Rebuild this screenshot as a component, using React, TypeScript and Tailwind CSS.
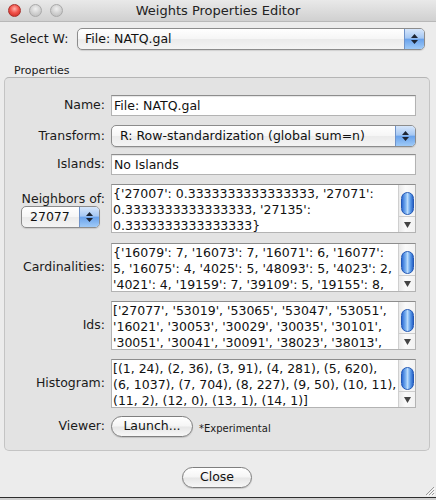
import React from "react";

// Aqua-style dialog: "Weights Properties Editor"

const font = "font-['DejaVu_Sans','Liberation_Sans',sans-serif]";

function Arrows() {
  return (
    <div className="flex h-full w-[20px] shrink-0 flex-col items-center justify-center gap-[2px] border-l border-[#6f93c9] bg-[linear-gradient(to_bottom,#d6e6fb_0%,#a6c8f3_45%,#6aa3ec_52%,#9fcaf7_100%)]">
      <svg width="7" height="4" viewBox="0 0 7 4">
        <path d="M3.5 0 L7 4 L0 4 Z" fill="#1d2533" />
      </svg>
      <svg width="7" height="4" viewBox="0 0 7 4">
        <path d="M0 0 L7 0 L3.5 4 Z" fill="#1d2533" />
      </svg>
    </div>
  );
}

function Popup({ value, className = "", pad = "pl-[8px]" }: { value: string; className?: string; pad?: string }) {
  return (
    <div
      className={`flex h-[22px] items-center overflow-hidden rounded-[5px] border border-[#8c8c8c] shadow-[0_1px_1px_rgba(0,0,0,0.12)] bg-[linear-gradient(to_bottom,#ffffff_0%,#f6f6f6_48%,#ebebeb_52%,#f4f4f4_100%)] ${className}`}
    >
      <span className={`flex-1 truncate text-[12.5px] text-[#111] ${pad}`}>{value}</span>
      <Arrows />
    </div>
  );
}

function Scroller() {
  return (
    <div className="flex w-[17px] shrink-0 flex-col border-l border-[#cfcfcf] bg-[linear-gradient(to_right,#e9e9e9,#fafafa_40%,#f2f2f2)]">
      <div className="flex flex-1 justify-center pt-[7px]">
        <div className="h-[23px] w-[13px] rounded-full border border-[#2459b5] bg-[linear-gradient(to_right,#2d6bd3_0%,#7fb5f2_35%,#b9dafb_50%,#5d9de9_75%,#2a63c8_100%)]" />
      </div>
      <div className="flex h-[16px] items-center justify-center border-t border-[#cdcdcd]">
        <svg width="7" height="6" viewBox="0 0 7 6">
          <path d="M0 0 L7 0 L3.5 6 Z" fill="#444" />
        </svg>
      </div>
    </div>
  );
}

function TextBox({ lines }: { lines: string[] }) {
  return (
    <div className="flex h-[49px] overflow-hidden border border-[#b3b3b3] border-t-[#8d8d8d] bg-white">
      <div className="flex-1 overflow-hidden whitespace-pre pl-[1px] pt-[1px] text-[12.5px] leading-[16px] text-[#111]">
        {lines.map((l) => (
          <div key={l}>{l}</div>
        ))}
      </div>
      <Scroller />
    </div>
  );
}

const field =
  "h-[21px] border border-[#b3b3b3] border-t-[#8d8d8d] bg-white px-[2px] text-[12.5px] leading-[19px] text-[#111] shadow-[inset_0_1px_1px_rgba(0,0,0,0.1)]";

const label = "text-right text-[12.5px] text-[#1a1a1a]";

function Pill({ children, className = "" }: { children: React.ReactNode; className?: string }) {
  return (
    <div
      className={`flex h-[21px] items-center justify-center rounded-full border border-[#7f7f7f] text-[12.5px] text-[#111] shadow-[0_1px_1px_rgba(0,0,0,0.15)] bg-[linear-gradient(to_bottom,#ffffff_0%,#f5f5f5_48%,#e6e6e6_52%,#f7f7f7_100%)] ${className}`}
    >
      {children}
    </div>
  );
}

export default function App() {
  return (
    <div className={`flex h-[500px] w-[436px] flex-col overflow-hidden bg-[#ececec] ${font}`}>
      {/* title bar */}
      <div className="relative flex h-[22px] shrink-0 items-center justify-center border-b border-[#b8b8b8] bg-[linear-gradient(to_bottom,#e9e9e9,#d0d0d0)]">
        <div className="absolute left-[8px] top-[4px] flex gap-[8px]">
          <span className="size-[13px] rounded-full border border-[#a8302b] bg-[radial-gradient(circle_at_50%_35%,#ffb3ad_0%,#f2554d_45%,#c5221c_100%)]" />
          <span className="size-[13px] rounded-full border border-[#a9a9a9] bg-[radial-gradient(circle_at_50%_35%,#f0f0f0_0%,#cfcfcf_55%,#b7b7b7_100%)]" />
          <span className="size-[13px] rounded-full border border-[#a9a9a9] bg-[radial-gradient(circle_at_50%_35%,#f0f0f0_0%,#cfcfcf_55%,#b7b7b7_100%)]" />
        </div>
        <span className="text-[13px] text-[#222]">Weights Properties Editor</span>
      </div>

      <div className="relative flex flex-1 flex-col">
        {/* Select W */}
        <div className="mt-[6px] flex items-center pl-[10px] pr-[11px]">
          <span className="w-[67px] text-[12.5px] text-[#1a1a1a]">Select W:</span>
          <Popup value="File: NATQ.gal" className="flex-1" pad="pl-[7px]" />
        </div>

        <div className="mt-[14px] pl-[14px] text-[11px] leading-[13px] text-[#1a1a1a]">Properties</div>

        {/* group box */}
        <div className="ml-[4px] w-[426px] rounded-[5px] border border-[#c4c4c4] border-t-[#b5b5b5] bg-[#e3e3e3] pb-[13px] pr-[13px] pt-[17px]">
          <div className="grid grid-cols-[100px_1fr] items-center gap-x-[6px]">
            <span className={label}>Name:</span>
            <div className={field}>File: NATQ.gal</div>

            <span className={`${label} mt-[9px]`}>Transform:</span>
            <Popup value="R: Row-standardization (global sum=n)" className="mt-[9px] h-[21px]" />

            <span className={`${label} mt-[7px]`}>Islands:</span>
            <div className={`${field} mt-[7px]`}>No Islands</div>

            <div className="mt-[9px] flex flex-col items-end self-start pt-[7px]">
              <span className={`${label} leading-[15px]`}>Neighbors of:</span>
              <Popup value="27077" className="mr-[5px] h-[21px] w-[79px]" />
            </div>
            <div className="mt-[9px]">
              <TextBox
                lines={[
                  "{'27007': 0.3333333333333333, '27071':",
                  "0.3333333333333333, '27135':",
                  "0.3333333333333333}",
                ]}
              />
            </div>

            <span className={`${label} mt-[10px]`}>Cardinalities:</span>
            <div className="mt-[10px]">
              <TextBox
                lines={[
                  "{'16079': 7, '16073': 7, '16071': 6, '16077':",
                  "5, '16075': 4, '4025': 5, '48093': 5, '4023': 2,",
                  "'4021': 4, '19159': 7, '39109': 5, '19155': 8,",
                ]}
              />
            </div>

            <span className={`${label} mt-[9px]`}>Ids:</span>
            <div className="mt-[9px]">
              <TextBox
                lines={[
                  "['27077', '53019', '53065', '53047', '53051',",
                  "'16021', '30053', '30029', '30035', '30101',",
                  "'30051', '30041', '30091', '38023', '38013',",
                ]}
              />
            </div>

            <span className={`${label} mt-[9px]`}>Histogram:</span>
            <div className="mt-[9px]">
              <TextBox
                lines={[
                  "[(1, 24), (2, 36), (3, 91), (4, 281), (5, 620),",
                  "(6, 1037), (7, 704), (8, 227), (9, 50), (10, 11),",
                  "(11, 2), (12, 0), (13, 1), (14, 1)]",
                ]}
              />
            </div>

            <span className={`${label} mt-[8px]`}>Viewer:</span>
            <div className="mt-[8px] flex items-center gap-[6px]">
              <Pill className="w-[82px]">Launch...</Pill>
              <span className="mt-[4px] text-[10px] text-[#1a1a1a]">*Experimental</span>
            </div>
          </div>
        </div>

        {/* close */}
        <div className="mt-[16px] flex justify-center">
          <Pill className="ml-[-2px] w-[70px]">Close</Pill>
        </div>

        {/* resize grip */}
        <svg className="absolute bottom-[1px] right-[1px]" width="11" height="11" viewBox="0 0 11 11">
          <path d="M10 2 L2 10 M10 5 L5 10 M10 8 L8 10" stroke="#9a9a9a" strokeWidth="1" />
          <path d="M11 3 L3 11 M11 6 L6 11 M11 9 L9 11" stroke="#fbfbfb" strokeWidth="1" />
        </svg>
      </div>

      <div className="h-[3px] shrink-0 border-t border-[#2e2e2e] bg-[#cfcfcf]" />
    </div>
  );
}
